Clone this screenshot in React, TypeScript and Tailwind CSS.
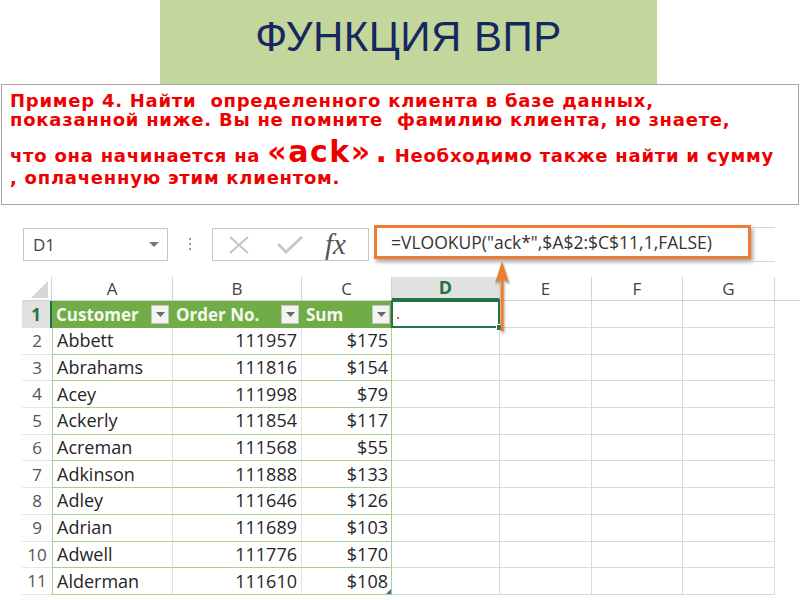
const rows: [string, string, string][] = [
  ["Abbett", "111957", "$175"],
  ["Abrahams", "111816", "$154"],
  ["Acey", "111998", "$79"],
  ["Ackerly", "111854", "$117"],
  ["Acreman", "111568", "$55"],
  ["Adkinson", "111888", "$133"],
  ["Adley", "111646", "$126"],
  ["Adrian", "111689", "$103"],
  ["Adwell", "111776", "$170"],
  ["Alderman", "111610", "$108"],
]

function FilterButton() {
  return (
    <div className="w-[18px] h-[19px] bg-[#f3f3f3] border border-[#c4c4c4] flex items-center justify-center">
      <svg width="9" height="6" viewBox="0 0 9 6">
        <polygon points="0,0 9,0 4.5,5" fill="#6b6b6b" />
      </svg>
    </div>
  )
}

export default function App() {
  return (
    <div className="relative w-[800px] h-[600px] bg-white overflow-hidden">
      {/* заголовок */}
      <div className="ml-[160px] w-[497px] h-[84px] bg-[#c3d69b] flex items-center justify-center pb-[10px]">
        <span className="text-[42px] leading-none text-[#17275f] font-['Liberation_Sans',sans-serif] tracking-[0.5px]">
          ФУНКЦИЯ ВПР
        </span>
      </div>

      {/* условие задачи */}
      <div className="mx-[1px] h-[121px] border border-[#a6a6a6] pl-[8px] pt-[6px] text-[18px] leading-[19px] tracking-[0.75px] font-bold text-[#ee0000] font-['DejaVu_Sans',sans-serif]">
        <div>Пример 4. Найти&nbsp; определенного клиента в базе данных,</div>
        <div>показанной ниже. Вы не помните&nbsp; фамилию клиента, но знаете,</div>
        <div className="mt-[13px]">
          что она начинается на{" "}
          <span className="text-[30px] tracking-[1.5px]">«ack»</span>
          <span className="text-[30px] ml-[4px]">.</span> Необходимо также найти и сумму
        </div>
        <div className="mt-[3px]">, оплаченную этим клиентом.</div>
      </div>

      {/* строка формул */}
      <div className="mt-[20px] flex items-start h-[37px] font-['Open_Sans',sans-serif] text-[17px] text-[#333]">
        <div className="ml-[23px] mt-[3px] w-[145px] h-[33px] border border-[#c6c6c6] flex items-center justify-between pl-[9px] pr-[8px]">
          <span className="text-[#444]">D1</span>
          <svg width="10" height="6" viewBox="0 0 10 6">
            <polygon points="0,0 10,0 5,5" fill="#777" />
          </svg>
        </div>
        <div className="w-[44px] h-[37px] flex flex-col items-center justify-center gap-[3px]">
          <div className="w-[2px] h-[2px] bg-[#999]" />
          <div className="w-[2px] h-[2px] bg-[#999]" />
          <div className="w-[2px] h-[2px] bg-[#999]" />
        </div>
        <div className="mt-[3px] w-[157px] h-[33px] border border-[#c6c6c6] flex items-center">
          <svg className="ml-[14px]" width="24" height="20" viewBox="0 0 24 20">
            <path d="M3 2 L21 18 M21 2 L3 18" stroke="#c4c4c4" strokeWidth="2" fill="none" />
          </svg>
          <svg className="ml-[26px]" width="26" height="18" viewBox="0 0 26 18">
            <path d="M1 8 L9 16 L25 1" stroke="#c8c8c8" strokeWidth="3" fill="none" />
          </svg>
          <span className="ml-[22px] text-[29px] leading-none italic text-[#555] font-['Liberation_Serif',serif]">
            fx
          </span>
        </div>
        <div className="ml-[5px] w-[377px] h-[34px] border-[3px] border-[#ed7d31] shadow-[2px_3px_4px_rgba(0,0,0,0.35)] flex items-center pl-[14px] text-[17.5px] text-[#333] bg-white">
          =VLOOKUP("ack*",$A$2:$C$11,1,FALSE)
        </div>
        <div className="mt-[2px] w-[24px] h-[35px] border-y border-[#d6d6d6]" />
      </div>

      {/* лист */}
      <div className="mt-[15px] ml-[22px] font-['Open_Sans',sans-serif] text-[17px]">
        <div className="flex h-[24px] text-[#444] border-b border-[#d4d4d4]">
          <div className="w-[30px] flex items-end justify-end pr-[3px] pb-[2px] border-r border-[#d4d4d4]">
            <svg width="17" height="17" viewBox="0 0 17 17">
              <polygon points="17,0 17,17 0,17" fill="#d6d6d6" />
            </svg>
          </div>
          <div className="w-[121px] flex items-center justify-center border-r border-[#d4d4d4]">A</div>
          <div className="w-[129px] flex items-center justify-center border-r border-[#d4d4d4]">B</div>
          <div className="w-[90px] flex items-center justify-center border-r border-[#d4d4d4]">C</div>
          <div className="w-[108px] flex items-center justify-center bg-[#e1e1e1] border-r border-[#d4d4d4] border-b-2 border-b-[#217346] font-bold text-[#217346] text-[18px]">
            D
          </div>
          <div className="w-[92px] flex items-center justify-center border-r border-[#d4d4d4]">E</div>
          <div className="w-[91px] flex items-center justify-center border-r border-[#d4d4d4]">F</div>
          <div className="w-[92px] flex items-center justify-center border-r border-[#d4d4d4]">G</div>
        </div>

        <div className="flex h-[27px]">
          <div className="w-[30px] bg-[#e1e1e1] border-r-2 border-[#217346] flex items-center justify-center font-bold text-[#217346]">
            1
          </div>
          <div className="w-[121px] bg-[#70ad47] flex items-center justify-between pl-[4px] pr-[4px] font-bold text-[#f4f9ef]">
            Customer
            <FilterButton />
          </div>
          <div className="w-[129px] bg-[#70ad47] flex items-center justify-between pl-[3px] pr-[3px] font-bold text-[#f4f9ef]">
            Order No.
            <FilterButton />
          </div>
          <div className="w-[90px] bg-[#70ad47] flex items-center justify-between pl-[4px] pr-[2px] font-bold text-[#f4f9ef]">
            Sum
            <FilterButton />
          </div>
          <div className="relative w-[108px] border-r border-b border-[#dadada]">
            <div className="absolute -left-[1px] -top-[1px] -right-[1px] -bottom-[1px] border-2 border-[#217346]" />
            <div className="absolute left-[5px] top-[16px] w-[2px] h-[2px] bg-[#c55]" />
            <div className="absolute -right-[4px] -bottom-[4px] w-[7px] h-[7px] bg-[#217346] border border-white" />
          </div>
          <div className="w-[92px] border-r border-b border-[#dadada]" />
          <div className="w-[91px] border-r border-b border-[#dadada]" />
          <div className="w-[92px] border-r border-b border-[#dadada]" />
        </div>

        {rows.map(([name, order, sum], i) => (
          <div key={name} className="flex h-[26.7px] text-[18px] text-[#262626]">
            <div className="w-[30px] flex items-center justify-center text-[17px] text-[#555] border-b border-[#e6e6e6]">
              {i + 2}
            </div>
            <div className="w-[121px] flex items-center pl-[4px] border-l border-l-[#a9d08e] border-r border-r-[#e0e0e0] border-b border-b-[#a9d08e]">
              {name}
            </div>
            <div className="w-[129px] flex items-center justify-end pr-[4px] border-r border-r-[#e0e0e0] border-b border-b-[#a9d08e]">
              {order}
            </div>
            <div className="relative w-[90px] flex items-center justify-end pr-[3px] border-r border-r-[#a9d08e] border-b border-b-[#a9d08e]">
              {sum}
              {i === rows.length - 1 && (
                <svg className="absolute right-0 bottom-0" width="5" height="5" viewBox="0 0 5 5">
                  <polygon points="5,0 5,5 0,5" fill="#3a66b5" />
                </svg>
              )}
            </div>
            <div className="w-[108px] border-r border-b border-[#dadada]" />
            <div className="w-[92px] border-r border-b border-[#dadada]" />
            <div className="w-[91px] border-r border-b border-[#dadada]" />
            <div className="w-[92px] border-r border-b border-[#dadada]" />
          </div>
        ))}
      </div>

      {/* стрелка к формуле */}
      <svg
        className="absolute left-[494px] top-[259px] drop-shadow-[1px_2px_1px_rgba(0,0,0,0.35)]"
        width="16"
        height="74"
        viewBox="0 0 16 74"
      >
        <line x1="8" y1="18" x2="8" y2="72" stroke="#ed7d31" strokeWidth="3" />
        <polygon points="8,2 15,24 8,19 1,24" fill="#ed7d31" />
      </svg>
    </div>
  )
}
